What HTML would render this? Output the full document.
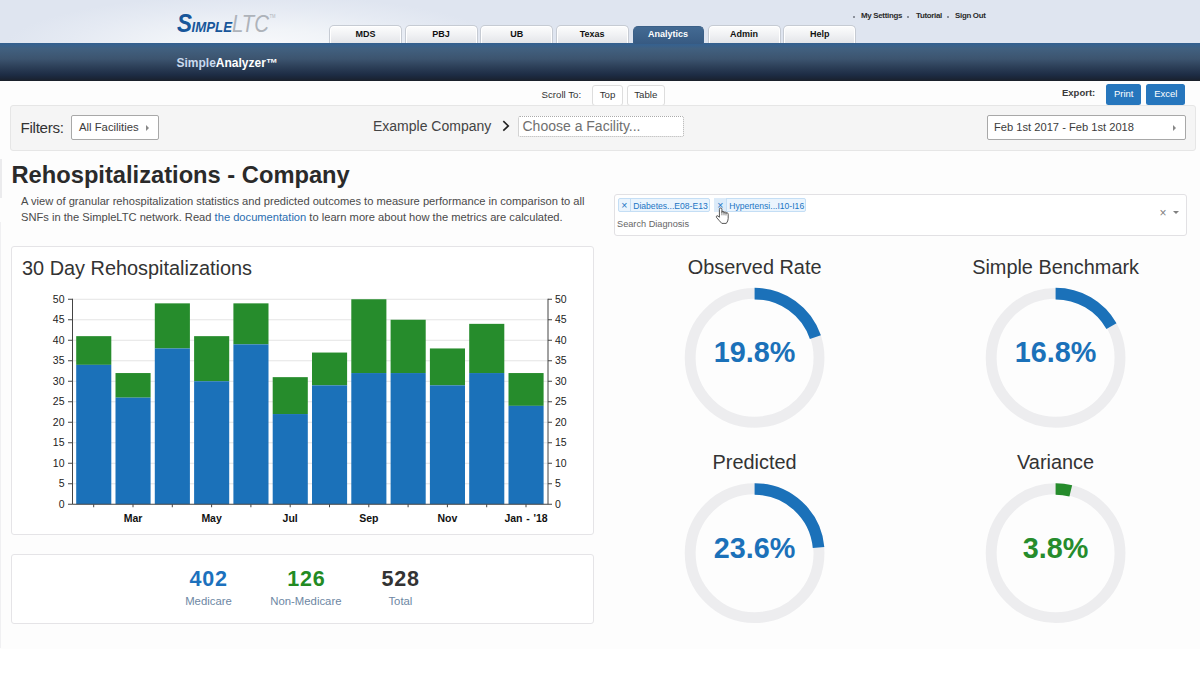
<!DOCTYPE html>
<html><head><meta charset="utf-8">
<style>
*{box-sizing:border-box;margin:0;padding:0}
html,body{width:1200px;height:675px;overflow:hidden;background:#fff;font-family:"Liberation Sans",sans-serif;color:#333}
#page{position:relative;width:1200px;height:675px;overflow:hidden}
.abs{position:absolute;white-space:nowrap}
#bg{left:0;top:0;width:1200px;height:649px;background:#fdfdfd}
#hdr{left:0;top:0;width:1200px;height:43px;background:radial-gradient(ellipse 250px 52px at 255px 47px,#f8f9fc 0%,#f1f4f8 35%,#e5eaf3 75%,#dfe5f0 100%)}
#nav{left:0;top:43px;width:1200px;height:38px;background:linear-gradient(#33608f 0%,#38618c 6%,#41607f 15%,#3c546f 42%,#2d4059 62%,#1d2c44 84%,#1a2537 93%,#1b2029 100%)}
.tab{top:25.4px;width:73px;height:18px;border:1px solid #c6cbd3;border-bottom:none;border-radius:5px 5px 0 0;background:linear-gradient(#fdfdfd,#f1f2f4 50%,#e3e5e9);box-shadow:inset 0 1px 0 #fff,inset 1px 0 0 #fff,inset -1px 0 0 #fff;font-size:9px;font-weight:bold;color:#111;text-align:center;line-height:17px}
.tab.on{background:linear-gradient(#436a93,#375a82);border-color:#3b6088;box-shadow:none;color:#fff;top:25.8px;height:18px;line-height:15.5px}
.tl{top:11.4px;font-size:7.9px;letter-spacing:-0.29px;font-weight:bold;color:#2a2a2a;line-height:10px}
.bl{top:15.5px;width:2.4px;height:2.4px;background:#8c919b}
.btn{border:1px solid #ddd;border-radius:3px;background:#fff;font-size:9.5px;color:#333;text-align:center}
.bbtn{border-radius:2.5px;background:#2676bd;color:#fff;font-size:9.5px;text-align:center}
.panel{border:1px solid #e5e4e7;border-radius:3px;background:#fff}
</style></head><body><div id="page">
<div id="bg" class="abs"></div>
<div class="abs" style="left:0;top:159px;width:1.5px;height:39px;background:#ebebed"></div>
<div class="abs" style="left:0;top:222px;width:1.3px;height:426px;background:#f0f0f2"></div>
<div id="hdr" class="abs"></div>
<div id="nav" class="abs"></div>

<!-- logo -->
<svg class="abs" id="logo" style="left:170px;top:5px" width="120" height="38" viewBox="170 5 120 38" font-family="Liberation Sans, sans-serif" font-style="italic">
<text x="177" y="32.3" font-size="25.5" font-weight="bold" fill="#17569a" textLength="15" lengthAdjust="spacingAndGlyphs">S</text>
<text x="191.5" y="31.8" font-size="14.6" font-weight="bold" fill="#17569a" textLength="40.5" lengthAdjust="spacingAndGlyphs">IMPLE</text>
<text x="232" y="31.8" font-size="24.5" fill="#aeb3ba" textLength="37" lengthAdjust="spacingAndGlyphs">LTC</text>
<text x="269.5" y="17.5" font-size="4.5" font-style="normal" fill="#aeb3ba" textLength="6" lengthAdjust="spacingAndGlyphs">TM</text>
</svg>

<!-- tabs -->
<div class="abs tab" style="left:329px">MDS</div>
<div class="abs tab" style="left:404.6px">PBJ</div>
<div class="abs tab" style="left:480.2px">UB</div>
<div class="abs tab" style="left:555.6px">Texas</div>
<div class="abs tab on" style="left:632.6px;width:71px">Analytics</div>
<div class="abs tab" style="left:707.6px">Admin</div>
<div class="abs tab" style="left:783.2px">Help</div>

<div class="abs bl" style="left:852.5px"></div>
<div class="abs tl" style="left:861px">My Settings</div>
<div class="abs bl" style="left:906.8px"></div>
<div class="abs tl" style="left:916px">Tutorial</div>
<div class="abs bl" style="left:946.5px"></div>
<div class="abs tl" style="left:955px">Sign Out</div>

<div class="abs" style="left:176.5px;top:56px;font-size:12px;font-weight:bold;line-height:14px;color:#c9d9ee">Simple<span style="color:#fff">Analyzer™</span></div>

<!-- scroll row -->
<div class="abs" style="left:541.5px;top:89px;font-size:9.7px;line-height:11px;color:#333">Scroll To:</div>
<div class="abs btn" style="left:592px;top:85px;width:31px;height:21px;line-height:17.5px;font-size:9.7px">Top</div>
<div class="abs btn" style="left:627px;top:85px;width:37.5px;height:21px;line-height:17.5px;font-size:9.7px">Table</div>
<div class="abs" style="left:1062px;top:87.3px;font-size:9.5px;font-weight:bold;line-height:11px;color:#3a3a3a">Export:</div>
<div class="abs bbtn" style="left:1106px;top:84px;width:35.3px;height:21px;line-height:20.2px">Print</div>
<div class="abs bbtn" style="left:1146.4px;top:84px;width:38.8px;height:21px;line-height:20.2px">Excel</div>

<!-- filter bar -->
<div class="abs" style="left:10px;top:105px;width:1186px;height:46px;background:#f5f5f5;border:1px solid #e6e6e6;border-radius:3px"></div>
<div class="abs" style="left:20.5px;top:117.5px;font-size:15.2px;letter-spacing:-0.3px;line-height:20px;color:#333">Filters:</div>
<div class="abs" style="left:71px;top:115px;width:88px;height:25px;background:#fff;border:1px solid #a8a8a8;border-radius:2px;font-size:11.3px;line-height:23px;padding-left:7px;color:#3c3c3c">All Facilities<span style="position:absolute;left:73.5px;top:9px;width:0;height:0;border-top:3px solid transparent;border-bottom:3px solid transparent;border-left:3.5px solid #888"></span></div>
<div class="abs" style="left:373px;top:117px;font-size:14px;line-height:18px;color:#444">Example Company</div>
<svg class="abs" style="left:500px;top:119px" width="12" height="14" viewBox="500 119 12 14"><path d="M503.3 121.2 L508.3 125.9 L503.3 130.6" fill="none" stroke="#222" stroke-width="1.6"/></svg>
<div class="abs" style="left:518px;top:116px;width:165.5px;height:21px;background:#fff;border:1px dotted #aaa;border-radius:2px;font-size:14px;line-height:19px;padding-left:3.5px;color:#707070">Choose a Facility...</div>
<div class="abs" style="left:986.5px;top:115px;width:199px;height:25px;background:#fff;border:1px solid #a8a8a8;border-radius:2px;font-size:11.15px;line-height:23px;padding-left:6.5px;color:#3c3c3c">Feb 1st 2017 - Feb 1st 2018<span style="position:absolute;left:185.5px;top:9px;width:0;height:0;border-top:3px solid transparent;border-bottom:3px solid transparent;border-left:3.5px solid #888"></span></div>

<!-- title -->
<div class="abs" style="left:11.5px;top:160.3px;font-size:23.7px;font-weight:bold;line-height:30px;color:#2a2a2a">Rehospitalizations - Company</div>
<div class="abs" style="left:21px;top:193.8px;font-size:11.15px;line-height:15px;color:#4a4a4a">A view of granular rehospitalization statistics and predicted outcomes to measure performance in comparison to all</div>
<div class="abs" style="left:21px;top:209.7px;font-size:11.15px;line-height:15px;color:#4a4a4a">SNFs in the SimpleLTC network. Read <span style="color:#2a6db0">the documentation</span> to learn more about how the metrics are calculated.</div>

<!-- select -->
<div class="abs" style="left:614px;top:193.6px;width:572.7px;height:42.4px;background:#fff;border:1px solid #e2e1e4;border-radius:3px"></div>
<div class="abs tag" style="left:617.8px;top:197.8px;width:92.2px;height:14.7px;background:#eaf4fd;border:1px solid #c4def5;border-radius:2px"></div>
<div class="abs" style="left:621.2px;top:199.2px;font-size:10.5px;line-height:12px;color:#1c74c4">×</div>
<div class="abs" style="left:630px;top:198.3px;width:1px;height:13.7px;background:#c4def5"></div>
<div class="abs" style="left:633.2px;top:199.5px;font-size:8.6px;line-height:12px;color:#1c74c4">Diabetes...E08-E13</div>
<div class="abs tag" style="left:713.6px;top:197.8px;width:92.8px;height:14.7px;background:#eaf4fd;border:1px solid #c4def5;border-radius:2px"></div>
<div class="abs" style="left:714px;top:198.3px;width:11.5px;height:13.7px;background:#dcebf9"></div>
<div class="abs" style="left:717.2px;top:199.2px;font-size:10.5px;line-height:12px;color:#1c74c4">×</div>
<div class="abs" style="left:725.5px;top:198.3px;width:1px;height:13.7px;background:#c4def5"></div>
<div class="abs" style="left:729.2px;top:199.5px;font-size:8.6px;line-height:12px;color:#1c74c4">Hypertensi...I10-I16</div>
<div class="abs" style="left:617px;top:218px;font-size:9.2px;line-height:12px;color:#666">Search Diagnosis</div>
<div class="abs" style="left:1159.4px;top:206.8px;font-size:12px;line-height:12px;color:#808080">×</div>
<div class="abs" style="left:1172.8px;top:211px;width:0;height:0;border-left:3px solid transparent;border-right:3px solid transparent;border-top:3px solid #808080"></div>
<!-- cursor -->
<svg class="abs" style="left:712px;top:204px" width="22" height="24" viewBox="712 204 22 24"><path d="M719.4 217.3 L719.4 209.3 Q719.4 208 720.65 208 Q721.9 208 721.9 209.3 L721.9 212.6 L721.9 212 Q722 211.2 723 211.3 Q724 211.4 724 212.3 L724 213.2 L724 212.5 Q724.2 211.8 725.1 211.9 Q726 212 726 212.9 L726 213.7 L726 213.2 Q726.3 212.6 727.2 212.8 Q728.2 213 728.2 214.2 L728.2 218.5 Q728.2 221 726.3 223.4 L721.8 223.4 Q719.5 221 716.4 217.3 Q716 216 717 215.7 Q718 215.5 719.4 217.3 Z" fill="#fff" stroke="#3a3a3a" stroke-width="0.85" stroke-linejoin="round"/><path d="M721.9 212.6 V215.3 M724 213 V215.3 M726 213.5 V215.5" fill="none" stroke="#555" stroke-width="0.7"/></svg>

<!-- chart panel -->
<div class="abs panel" style="left:11px;top:246.3px;width:582.7px;height:288.6px"></div>
<div class="abs" style="left:22px;top:256px;font-size:19.9px;line-height:24px;color:#333">30 Day Rehospitalizations</div>
<svg class="abs" id="chart" style="left:11px;top:246px" width="583" height="288" viewBox="11 246 583 288" font-family="Liberation Sans, sans-serif">
<line x1="72.5" x2="548" y1="483.75" y2="483.75" stroke="#e4e4e4" stroke-width="1"/>
<line x1="72.5" x2="548" y1="463.25" y2="463.25" stroke="#e4e4e4" stroke-width="1"/>
<line x1="72.5" x2="548" y1="442.75" y2="442.75" stroke="#e4e4e4" stroke-width="1"/>
<line x1="72.5" x2="548" y1="422.25" y2="422.25" stroke="#e4e4e4" stroke-width="1"/>
<line x1="72.5" x2="548" y1="401.75" y2="401.75" stroke="#e4e4e4" stroke-width="1"/>
<line x1="72.5" x2="548" y1="381.25" y2="381.25" stroke="#e4e4e4" stroke-width="1"/>
<line x1="72.5" x2="548" y1="360.75" y2="360.75" stroke="#e4e4e4" stroke-width="1"/>
<line x1="72.5" x2="548" y1="340.25" y2="340.25" stroke="#e4e4e4" stroke-width="1"/>
<line x1="72.5" x2="548" y1="319.75" y2="319.75" stroke="#e4e4e4" stroke-width="1"/>
<line x1="72.5" x2="548" y1="299.25" y2="299.25" stroke="#e4e4e4" stroke-width="1"/>
<rect x="76.20" y="336.15" width="35.1" height="28.70" fill="#268c2c"/>
<rect x="76.20" y="364.85" width="35.1" height="139.40" fill="#1b71b9"/>
<rect x="115.50" y="373.05" width="35.1" height="24.60" fill="#268c2c"/>
<rect x="115.50" y="397.65" width="35.1" height="106.60" fill="#1b71b9"/>
<rect x="154.80" y="303.35" width="35.1" height="45.10" fill="#268c2c"/>
<rect x="154.80" y="348.45" width="35.1" height="155.80" fill="#1b71b9"/>
<rect x="194.10" y="336.15" width="35.1" height="45.10" fill="#268c2c"/>
<rect x="194.10" y="381.25" width="35.1" height="123.00" fill="#1b71b9"/>
<rect x="233.40" y="303.35" width="35.1" height="41.00" fill="#268c2c"/>
<rect x="233.40" y="344.35" width="35.1" height="159.90" fill="#1b71b9"/>
<rect x="272.70" y="377.15" width="35.1" height="36.90" fill="#268c2c"/>
<rect x="272.70" y="414.05" width="35.1" height="90.20" fill="#1b71b9"/>
<rect x="312.00" y="352.55" width="35.1" height="32.80" fill="#268c2c"/>
<rect x="312.00" y="385.35" width="35.1" height="118.90" fill="#1b71b9"/>
<rect x="351.30" y="299.25" width="35.1" height="73.80" fill="#268c2c"/>
<rect x="351.30" y="373.05" width="35.1" height="131.20" fill="#1b71b9"/>
<rect x="390.60" y="319.75" width="35.1" height="53.30" fill="#268c2c"/>
<rect x="390.60" y="373.05" width="35.1" height="131.20" fill="#1b71b9"/>
<rect x="429.90" y="348.45" width="35.1" height="36.90" fill="#268c2c"/>
<rect x="429.90" y="385.35" width="35.1" height="118.90" fill="#1b71b9"/>
<rect x="469.20" y="323.85" width="35.1" height="49.20" fill="#268c2c"/>
<rect x="469.20" y="373.05" width="35.1" height="131.20" fill="#1b71b9"/>
<rect x="508.50" y="373.05" width="35.1" height="32.80" fill="#268c2c"/>
<rect x="508.50" y="405.85" width="35.1" height="98.40" fill="#1b71b9"/>
<path d="M72.5 298.75 V504.25 H548 V298.75" fill="none" stroke="#444" stroke-width="1"/>
<line x1="68.0" x2="72.5" y1="504.25" y2="504.25" stroke="#444" stroke-width="1"/>
<line x1="548" x2="552" y1="504.25" y2="504.25" stroke="#444" stroke-width="1"/>
<text x="64.5" y="507.85" text-anchor="end" font-size="10.5" fill="#222">0</text>
<text x="555" y="507.85" text-anchor="start" font-size="10.5" fill="#222">0</text>
<line x1="68.0" x2="72.5" y1="483.75" y2="483.75" stroke="#444" stroke-width="1"/>
<line x1="548" x2="552" y1="483.75" y2="483.75" stroke="#444" stroke-width="1"/>
<text x="64.5" y="487.35" text-anchor="end" font-size="10.5" fill="#222">5</text>
<text x="555" y="487.35" text-anchor="start" font-size="10.5" fill="#222">5</text>
<line x1="68.0" x2="72.5" y1="463.25" y2="463.25" stroke="#444" stroke-width="1"/>
<line x1="548" x2="552" y1="463.25" y2="463.25" stroke="#444" stroke-width="1"/>
<text x="64.5" y="466.85" text-anchor="end" font-size="10.5" fill="#222">10</text>
<text x="555" y="466.85" text-anchor="start" font-size="10.5" fill="#222">10</text>
<line x1="68.0" x2="72.5" y1="442.75" y2="442.75" stroke="#444" stroke-width="1"/>
<line x1="548" x2="552" y1="442.75" y2="442.75" stroke="#444" stroke-width="1"/>
<text x="64.5" y="446.35" text-anchor="end" font-size="10.5" fill="#222">15</text>
<text x="555" y="446.35" text-anchor="start" font-size="10.5" fill="#222">15</text>
<line x1="68.0" x2="72.5" y1="422.25" y2="422.25" stroke="#444" stroke-width="1"/>
<line x1="548" x2="552" y1="422.25" y2="422.25" stroke="#444" stroke-width="1"/>
<text x="64.5" y="425.85" text-anchor="end" font-size="10.5" fill="#222">20</text>
<text x="555" y="425.85" text-anchor="start" font-size="10.5" fill="#222">20</text>
<line x1="68.0" x2="72.5" y1="401.75" y2="401.75" stroke="#444" stroke-width="1"/>
<line x1="548" x2="552" y1="401.75" y2="401.75" stroke="#444" stroke-width="1"/>
<text x="64.5" y="405.35" text-anchor="end" font-size="10.5" fill="#222">25</text>
<text x="555" y="405.35" text-anchor="start" font-size="10.5" fill="#222">25</text>
<line x1="68.0" x2="72.5" y1="381.25" y2="381.25" stroke="#444" stroke-width="1"/>
<line x1="548" x2="552" y1="381.25" y2="381.25" stroke="#444" stroke-width="1"/>
<text x="64.5" y="384.85" text-anchor="end" font-size="10.5" fill="#222">30</text>
<text x="555" y="384.85" text-anchor="start" font-size="10.5" fill="#222">30</text>
<line x1="68.0" x2="72.5" y1="360.75" y2="360.75" stroke="#444" stroke-width="1"/>
<line x1="548" x2="552" y1="360.75" y2="360.75" stroke="#444" stroke-width="1"/>
<text x="64.5" y="364.35" text-anchor="end" font-size="10.5" fill="#222">35</text>
<text x="555" y="364.35" text-anchor="start" font-size="10.5" fill="#222">35</text>
<line x1="68.0" x2="72.5" y1="340.25" y2="340.25" stroke="#444" stroke-width="1"/>
<line x1="548" x2="552" y1="340.25" y2="340.25" stroke="#444" stroke-width="1"/>
<text x="64.5" y="343.85" text-anchor="end" font-size="10.5" fill="#222">40</text>
<text x="555" y="343.85" text-anchor="start" font-size="10.5" fill="#222">40</text>
<line x1="68.0" x2="72.5" y1="319.75" y2="319.75" stroke="#444" stroke-width="1"/>
<line x1="548" x2="552" y1="319.75" y2="319.75" stroke="#444" stroke-width="1"/>
<text x="64.5" y="323.35" text-anchor="end" font-size="10.5" fill="#222">45</text>
<text x="555" y="323.35" text-anchor="start" font-size="10.5" fill="#222">45</text>
<line x1="68.0" x2="72.5" y1="299.25" y2="299.25" stroke="#444" stroke-width="1"/>
<line x1="548" x2="552" y1="299.25" y2="299.25" stroke="#444" stroke-width="1"/>
<text x="64.5" y="302.85" text-anchor="end" font-size="10.5" fill="#222">50</text>
<text x="555" y="302.85" text-anchor="start" font-size="10.5" fill="#222">50</text>
<line x1="93.70" x2="93.70" y1="504.25" y2="507.25" stroke="#444" stroke-width="1"/>
<line x1="133.00" x2="133.00" y1="504.25" y2="507.25" stroke="#444" stroke-width="1"/>
<text x="133.00" y="522.45" text-anchor="middle" font-size="10.5" font-weight="bold" fill="#111" word-spacing="0.8">Mar</text>
<line x1="172.30" x2="172.30" y1="504.25" y2="507.25" stroke="#444" stroke-width="1"/>
<line x1="211.60" x2="211.60" y1="504.25" y2="507.25" stroke="#444" stroke-width="1"/>
<text x="211.60" y="522.45" text-anchor="middle" font-size="10.5" font-weight="bold" fill="#111" word-spacing="0.8">May</text>
<line x1="250.90" x2="250.90" y1="504.25" y2="507.25" stroke="#444" stroke-width="1"/>
<line x1="290.20" x2="290.20" y1="504.25" y2="507.25" stroke="#444" stroke-width="1"/>
<text x="290.20" y="522.45" text-anchor="middle" font-size="10.5" font-weight="bold" fill="#111" word-spacing="0.8">Jul</text>
<line x1="329.50" x2="329.50" y1="504.25" y2="507.25" stroke="#444" stroke-width="1"/>
<line x1="368.80" x2="368.80" y1="504.25" y2="507.25" stroke="#444" stroke-width="1"/>
<text x="368.80" y="522.45" text-anchor="middle" font-size="10.5" font-weight="bold" fill="#111" word-spacing="0.8">Sep</text>
<line x1="408.10" x2="408.10" y1="504.25" y2="507.25" stroke="#444" stroke-width="1"/>
<line x1="447.40" x2="447.40" y1="504.25" y2="507.25" stroke="#444" stroke-width="1"/>
<text x="447.40" y="522.45" text-anchor="middle" font-size="10.5" font-weight="bold" fill="#111" word-spacing="0.8">Nov</text>
<line x1="486.70" x2="486.70" y1="504.25" y2="507.25" stroke="#444" stroke-width="1"/>
<line x1="526.00" x2="526.00" y1="504.25" y2="507.25" stroke="#444" stroke-width="1"/>
<text x="526.00" y="522.45" text-anchor="middle" font-size="10.5" font-weight="bold" fill="#111" word-spacing="0.8">Jan - '18</text>
</svg>

<!-- stats panel -->
<div class="abs panel" style="left:11px;top:554px;width:582.7px;height:69.6px"></div>
<div class="abs st" style="left:158.3px;top:566px;width:100px;text-align:center;font-size:21.5px;letter-spacing:0.8px;text-indent:0.8px;font-weight:bold;line-height:26px;color:#1c71bd">402</div>
<div class="abs st" style="left:158.5px;top:594.2px;width:100px;text-align:center;font-size:11.35px;line-height:14px;color:#6d87a3">Medicare</div>
<div class="abs st" style="left:256.1px;top:566px;width:100px;text-align:center;font-size:21.5px;letter-spacing:0.8px;text-indent:0.8px;font-weight:bold;line-height:26px;color:#238b23">126</div>
<div class="abs st" style="left:255.9px;top:594.2px;width:100px;text-align:center;font-size:11.35px;line-height:14px;color:#6d87a3">Non-Medicare</div>
<div class="abs st" style="left:350.2px;top:566px;width:100px;text-align:center;font-size:21.5px;letter-spacing:0.8px;text-indent:0.8px;font-weight:bold;line-height:26px;color:#333">528</div>
<div class="abs st" style="left:350.4px;top:594.2px;width:100px;text-align:center;font-size:11.35px;line-height:14px;color:#6d87a3">Total</div>

<!-- gauges -->
<svg class="abs" id="gauges" style="left:600px;top:246px" width="600" height="400" viewBox="600 246 600 400" font-family="Liberation Sans, sans-serif">
<text x="754.6" y="273.7" text-anchor="middle" font-size="19.9" fill="#333">Observed Rate</text>
<circle cx="754.6" cy="357.8" r="64.4" fill="none" stroke="#ededef" stroke-width="10.9"/>
<path d="M754.6 293.6 A64.2 64.2 0 0 1 815.40 337.20" fill="none" stroke="#1b71b9" stroke-width="11.6"/>
<text x="754.6" y="362.4" text-anchor="middle" font-size="28.8" font-weight="bold" fill="#1b71b9">19.8%</text>
<text x="1055.6" y="273.7" text-anchor="middle" font-size="19.9" fill="#333">Simple Benchmark</text>
<circle cx="1055.6" cy="357.8" r="64.4" fill="none" stroke="#ededef" stroke-width="10.9"/>
<path d="M1055.6 293.6 A64.2 64.2 0 0 1 1111.47 326.17" fill="none" stroke="#1b71b9" stroke-width="11.6"/>
<text x="1055.6" y="362.4" text-anchor="middle" font-size="28.8" font-weight="bold" fill="#1b71b9">16.8%</text>
<text x="754.6" y="469.1" text-anchor="middle" font-size="19.9" fill="#333">Predicted</text>
<circle cx="754.6" cy="553.2" r="64.4" fill="none" stroke="#ededef" stroke-width="10.9"/>
<path d="M754.6 489.00000000000006 A64.2 64.2 0 0 1 818.55 547.56" fill="none" stroke="#1b71b9" stroke-width="11.6"/>
<text x="754.6" y="557.8" text-anchor="middle" font-size="28.8" font-weight="bold" fill="#1b71b9">23.6%</text>
<text x="1055.6" y="469.1" text-anchor="middle" font-size="19.9" fill="#333">Variance</text>
<circle cx="1055.6" cy="553.2" r="64.4" fill="none" stroke="#ededef" stroke-width="10.9"/>
<path d="M1055.6 489.00000000000006 A64.2 64.2 0 0 1 1070.78 490.82" fill="none" stroke="#268c2c" stroke-width="11.6"/>
<text x="1055.6" y="557.8" text-anchor="middle" font-size="28.8" font-weight="bold" fill="#268c2c">3.8%</text>
</svg>
</div></body></html>
